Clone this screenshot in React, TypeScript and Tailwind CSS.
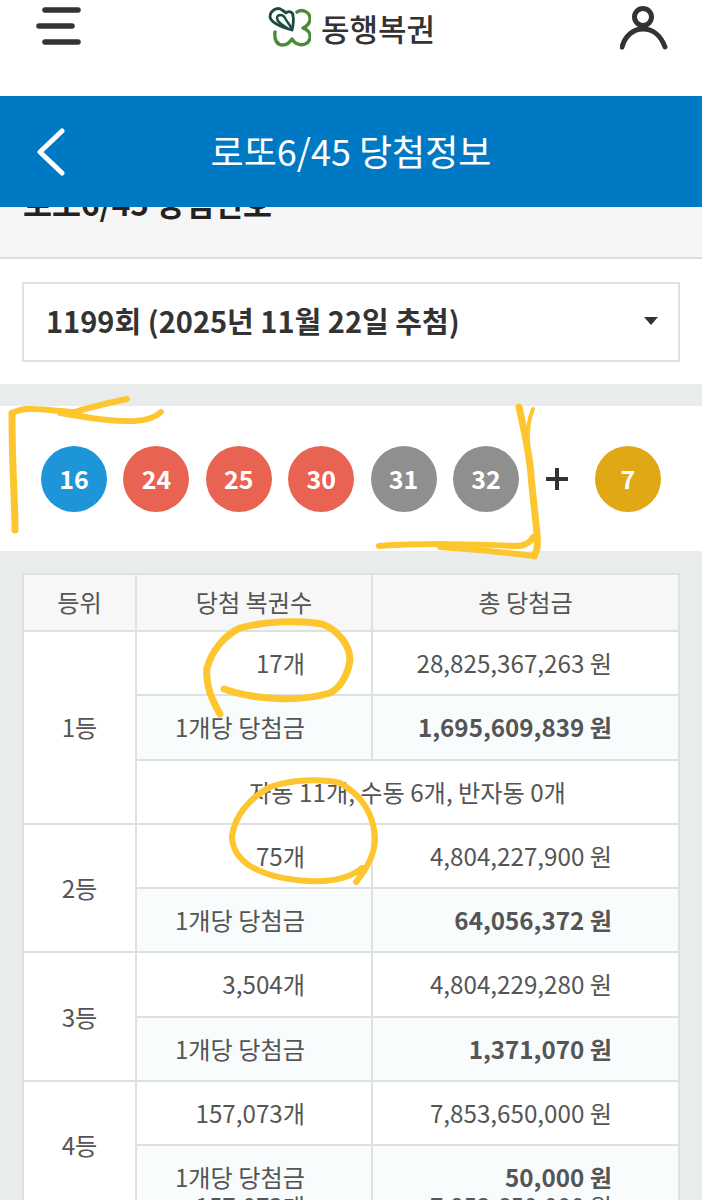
import React from 'react';

const balls = [
  { n: 16, color: 'bg-[#1e95d9]' },
  { n: 24, color: 'bg-[#e96353]' },
  { n: 25, color: 'bg-[#e96353]' },
  { n: 30, color: 'bg-[#e96353]' },
  { n: 31, color: 'bg-[#8f8f8f]' },
  { n: 32, color: 'bg-[#8f8f8f]' },
];

const ranks = [
  { rank: '1등', count: '17개', total: '28,825,367,263 원', each: '1,695,609,839 원', note: '자동 11개, 수동 6개, 반자동 0개' },
  { rank: '2등', count: '75개', total: '4,804,227,900 원', each: '64,056,372 원' },
  { rank: '3등', count: '3,504개', total: '4,804,229,280 원', each: '1,371,070 원' },
  { rank: '4등', count: '157,073개', total: '7,853,650,000 원', each: '50,000 원', ghost: true },
];

const cell = 'relative border-2 border-[#dfe1e1] h-[64.3px] p-0';
const head = 'border-2 border-[#dfe1e1] h-[57px] p-0 font-normal';

const Ball = ({ n, color }: { n: number; color: string }) => (
  <div className={`w-[66px] h-[66px] rounded-full flex items-center justify-center text-white text-[25px] font-bold ${color}`}>
    {n}
  </div>
);

const Logo = () => (
  <svg className="-mt-[2px]" width="44" height="44" viewBox="0 0 44 44" fill="none" strokeLinecap="round" strokeLinejoin="round">
    <path
      d="M30 8 C36 4 44 9 43 16 C42 21 38 23 36 24 C40 25 44 29 43 34 C42 40 35 42 31 40 C28 39 26 37 25 35 C23 38 20 41 16 41 C10 41 7 36 8 28"
      stroke="#4b8b35"
      strokeWidth="3.4"
    />
    <path
      d="M25 26 C18 24 4 20 3 13 C3 7 10 2 15 6 C18 8 19 9 19 9 C21 7 26 7 26 12 C27 17 26 22 25 26 Z"
      stroke="#1d4a3f"
      strokeWidth="2.8"
    />
    <path d="M25 26 C24 22 20 18 18 14 C16 10 10 10 10 14 C10 18 14 20 20 24" stroke="#1d4a3f" strokeWidth="2.4" />
  </svg>
);

const Marks = () => (
  <svg
    className="absolute left-0 top-0 pointer-events-none"
    width="702"
    height="1200"
    fill="none"
    stroke="#fdc62f"
    strokeWidth="6"
    strokeLinecap="round"
    strokeLinejoin="round"
  >
    <path d="M15 530 C15 500 12 470 12 413" strokeWidth="7" />
    <path d="M12 413 C25 405 50 411 75 412 C90 407 105 404 127 399" />
    <path d="M60 413 C85 417 110 422 135 421 C148 420 156 417 161 412" />
    <path d="M519 407 C524 430 529 450 531 475 C533 500 536 520 537 535 C538 545 537 552 534 556" strokeWidth="7" />
    <path d="M533 409 C529 418 527 428 528 445" strokeWidth="4" />
    <path d="M379 546 C420 543 480 544 515 546 C523 546 530 544 533 537" strokeWidth="6" />
    <path d="M440 547 C470 549 510 553 535 556" />
    <path d="M220 714 C212 700 205 685 207 668 C212 650 225 635 240 628 C265 621 300 620 322 624 C338 630 350 645 350 660 C348 675 340 688 330 693 C300 702 255 700 224 689" strokeWidth="7" />
    <path d="M362 868 C350 878 330 882 309 881 C285 880 265 875 250 866 C238 858 232 848 232 836 C235 815 250 798 270 787 C290 780 320 778 340 783 C362 795 374 815 375 838 C375 850 370 865 356 882" strokeWidth="6" />
  </svg>
);

export default function App() {
  return (
    <div className="relative w-[702px] h-[1200px] overflow-hidden bg-[#e9ecec] font-['Noto_Sans_CJK_KR',sans-serif] text-[#333]">
      {/* top bar */}
      <header className="h-24 bg-white flex justify-between pt-[6px] pl-[36px] pr-[34px]">
        <svg width="46" height="40" viewBox="0 0 46 40" fill="none" stroke="#333" strokeWidth="5.5" strokeLinecap="round">
          <path d="M9 4 H42 M3 20 H36 M9 36 H42" />
        </svg>
        <div className="flex items-start gap-[10px]">
          <Logo />
          <span className="text-[31px] leading-[44px] font-medium text-[#333]">동행복권</span>
        </div>
        <svg width="48" height="44" viewBox="0 0 48 44" fill="none" stroke="#333" strokeWidth="5" strokeLinecap="round">
          <circle cx="23" cy="11" r="8.5" />
          <path d="M2 41 C5 30 13 23 23 23 C33 23 41 30 45 41" />
        </svg>
      </header>

      {/* blue title */}
      <div className="relative z-10 h-[111px] pb-[3px] bg-[#0079c4] flex items-center justify-center">
        <svg className="absolute left-[36px] top-[32px]" width="30" height="48" viewBox="0 0 30 48" fill="none" stroke="#fff" strokeWidth="5" strokeLinecap="round" strokeLinejoin="round">
          <path d="M26 3 L4 24 L26 45" />
        </svg>
        <h1 className="text-[36px] font-normal text-white">로또6/45 당첨정보</h1>
      </div>

      {/* section title, scrolled under the blue bar */}
      <div className="flow-root h-[52px] bg-[#f6f6f6] border-b-2 border-[#dcdcdc] pl-[23px]">
        <div className="-mt-[26px] text-[31.5px] leading-[42px] font-bold text-[#222]">로또6/45 당첨번호</div>
      </div>

      {/* draw select */}
      <div className="h-[125px] bg-white px-[22px] pt-[23px]">
        <div className="h-[80px] pb-[3px] border-2 border-[#dfe1e1] flex items-center justify-between pl-[22px] pr-[20px]">
          <span className="text-[29px] font-bold text-[#333]">1199회 (2025년 11월 22일 추첨)</span>
          <div className="w-0 h-0 border-x-[7.5px] border-x-transparent border-t-[8px] border-t-[#333]" />
        </div>
      </div>

      {/* winning numbers */}
      <div className="mt-[22px] h-[145px] bg-white flex items-center pl-[41px]">
        <div className="flex gap-[16.4px]">
          {balls.map((b) => (
            <Ball key={b.n} n={b.n} color={b.color} />
          ))}
        </div>
        <div className="w-[76px] flex justify-center">
          <svg width="24" height="24" viewBox="0 0 24 24" stroke="#333" strokeWidth="4">
            <path d="M1 12 H23 M12 1 V23" />
          </svg>
        </div>
        <Ball n={7} color="bg-[#e1a815]" />
      </div>

      {/* prize table */}
      <div className="px-[22px] pt-[22px]">
        <table className="w-full table-fixed border-collapse text-[24.2px] text-[#555] bg-white">
          <colgroup>
            <col className="w-[113px]" />
            <col className="w-[236px]" />
            <col />
          </colgroup>
          <thead>
            <tr className="bg-[#f7f7f7]">
              <th className={head}>등위</th>
              <th className={head}>당첨 복권수</th>
              <th className={head}>총 당첨금</th>
            </tr>
          </thead>
          <tbody>
            {ranks.map((r) => (
              <React.Fragment key={r.rank}>
                <tr>
                  <td rowSpan={r.note ? 3 : 2} className={`${cell} text-center`}>{r.rank}</td>
                  <td className={`${cell} text-right pr-[66px]`}>{r.count}</td>
                  <td className={`${cell} text-right pr-[66px]`}>{r.total}</td>
                </tr>
                <tr className="bg-[#f8fcfd]">
                  <td className={`${cell} text-right pr-[66px]`}>
                    1개당 당첨금
                    {r.ghost && <span className="absolute right-[66px] top-[42px]">{r.count}</span>}
                  </td>
                  <td className={`${cell} text-right pr-[66px] font-bold`}>
                    {r.each}
                    {r.ghost && <span className="absolute right-[66px] top-[42px] font-normal">{r.total}</span>}
                  </td>
                </tr>
                {r.note && (
                  <tr>
                    <td colSpan={2} className={`${cell} text-center`}>{r.note}</td>
                  </tr>
                )}
              </React.Fragment>
            ))}
          </tbody>
        </table>
      </div>

      <Marks />
    </div>
  );
}
